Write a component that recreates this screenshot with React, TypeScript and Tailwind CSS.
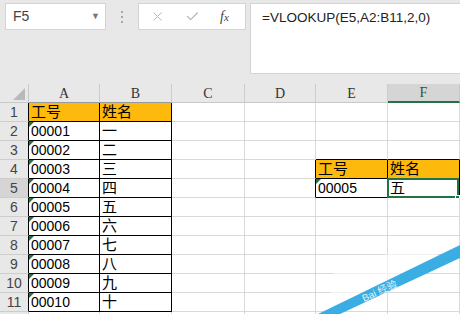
import { X, Check } from "lucide-react";

const COLS = ["A", "B", "C", "D", "E", "F"];
const ROWS = [1, 2, 3, 4, 5, 6, 7, 8, 9, 10, 11, 12];

const cells: Record<string, string> = {
  A1: "工号",
  B1: "姓名",
  E4: "工号",
  F4: "姓名",
  E5: "00005",
  F5: "五",
};
const names = ["一", "二", "三", "四", "五", "六", "七", "八", "九", "十"];
names.forEach((n, i) => {
  cells["A" + (i + 2)] = String(i + 1).padStart(5, "0");
  cells["B" + (i + 2)] = n;
});

// cells inside the bordered tables
const inTable = (c: number, r: number) =>
  (c >= 0 && c <= 1 && r >= 1 && r <= 11) || (c >= 4 && c <= 5 && r >= 4 && r <= 5);
const isHead = (c: number, r: number) =>
  (r === 1 && c <= 1) || (r === 4 && c >= 4 && c <= 5);
const hasFlag = (c: number, r: number) =>
  (c === 0 && r >= 2 && r <= 11) || (c === 4 && r === 5);

const Cell = ({ c, r }: { c: number; r: number }) => {
  const key = COLS[c] + r;
  const val = cells[key];
  const rightBlack = inTable(c, r) || inTable(c + 1, r);
  const bottomBlack = inTable(c, r) || inTable(c, r + 1);
  const selected = key === "F5";
  return (
    <div
      className={[
        "relative flex items-end overflow-visible whitespace-nowrap border-r border-b pl-[2px] text-black",
        rightBlack ? "border-r-black" : "border-r-[#d9d9d9]",
        bottomBlack ? "border-b-black" : "border-b-[#d9d9d9]",
        isHead(c, r) ? "bg-[#fdb90c]" : "bg-white",
        val && /^\d/.test(val) ? "text-[14px] leading-[17px]" : "text-[15px] leading-[18px]",
      ].join(" ")}
    >
      {hasFlag(c, r) && (
        <div className="absolute left-0 top-0 h-0 w-0 border-t-[5px] border-r-[5px] border-t-[#217346] border-r-transparent" />
      )}
      {val}
      {selected && (
        <div className="absolute -left-[1px] -top-[1px] bottom-[-1px] right-0 border-2 border-[#217346]">
          <div className="absolute -bottom-[4px] -right-[3px] h-[5px] w-[5px] border border-white bg-[#217346]" />
        </div>
      )}
    </div>
  );
};

export default function App() {
  return (
    <div className="relative h-[314px] w-[460px] overflow-hidden bg-[#e8e8e8] font-['Liberation_Sans','Noto_Sans_CJK_SC',sans-serif]">
      {/* formula bar area */}
      <div className="flex h-[84px] items-start pl-[5px] pt-[3px]">
        <div className="flex h-[27px] w-[101px] items-center justify-between border border-[#d4d4d4] bg-white pl-[7px] pr-[5px] text-[14px] text-[#444]">
          <span>F5</span>
          <span className="text-[9px] text-[#777]">▼</span>
        </div>
        <div className="flex h-[27px] w-[32px] flex-col items-center justify-center gap-[3px]">
          <div className="h-[2px] w-[2px] bg-[#a8a8a8]" />
          <div className="h-[2px] w-[2px] bg-[#a8a8a8]" />
          <div className="h-[2px] w-[2px] bg-[#a8a8a8]" />
        </div>
        <div className="flex h-[27px] w-[108px] items-center border border-[#d4d4d4] bg-white pl-[11px]">
          <X size={15} strokeWidth={1.5} className="text-[#b4b4b4]" />
          <Check size={15} strokeWidth={1.8} className="ml-[20px] text-[#b4b4b4]" />
          <span className="ml-[20px] font-['Liberation_Serif'] text-[14px] italic text-[#444]">
            f<span className="text-[11px]">x</span>
          </span>
        </div>
        <div className="ml-[4px] h-[71px] flex-1 border-t border-b border-l border-[#d4d4d4] bg-white pl-[11px] pt-[4px] text-[13.5px] text-[#222]">
          =VLOOKUP(E5,A2:B11,2,0)
        </div>
      </div>

      {/* sheet */}
      <div className="grid grid-cols-[29px_71px_72px_73px_71px_72px_1fr] grid-rows-[19px_repeat(12,19px)] bg-white">
        <div className="relative border-r border-b border-[#c8c8c8] bg-[#e8e8e8]">
          <svg className="absolute bottom-[2px] right-[3px]" width="12" height="12" viewBox="0 0 12 12">
            <polygon points="12,0 12,12 0,12" fill="#b9b9b9" />
          </svg>
        </div>
        {COLS.map((l, c) =>
          l === "F" ? (
            <div
              key={l}
              className="flex items-center justify-center border-r border-r-[#c8c8c8] border-b-2 border-b-[#217346] bg-[#d5d5d5] font-['Liberation_Serif'] text-[14px] text-[#1d5a36]"
            >
              {l}
            </div>
          ) : (
            <div
              key={l}
              className={[
                "flex items-center justify-center border-r border-b border-r-[#cdcdcd] bg-[#e8e8e8] font-['Liberation_Serif'] text-[14px] text-[#333]",
                c <= 1 ? "border-b-[#9a9a9a]" : "border-b-[#c8c8c8]",
              ].join(" ")}
            >
              {l}
            </div>
          )
        )}
        {ROWS.map((r) => [
          <div
            key={"h" + r}
            className={[
              "flex items-end justify-center border-r border-b border-b-[#cdcdcd] text-[14px] leading-[18px] text-[#444]",
              r === 5 ? "bg-[#d5d5d5]" : "bg-[#e8e8e8]",
              r <= 11 ? "border-r-black" : "border-r-[#c8c8c8]",
            ].join(" ")}
          >
            {r <= 11 ? r : null}
          </div>,
          ...COLS.map((_, c) => <Cell key={COLS[c] + r} c={c} r={r} />),
        ])}
      </div>

      {/* watermark */}
      <svg className="absolute bottom-0 right-0" width="160" height="114" viewBox="0 0 160 114">
        <polygon points="28,110 34,64 122,48 140,56" fill="#ffffff" opacity="0.6" />
        <polygon points="18,114 160,45 160,58 40,114" fill="#3aaee2" />
        <text
          x="64"
          y="102"
          fontSize="10"
          fill="#ffffff"
          opacity="0.85"
          transform="rotate(-25 64 102)"
          fontFamily="Liberation Sans, Noto Sans CJK SC, sans-serif"
        >
          Bai 经验
        </text>
      </svg>
    </div>
  );
}
